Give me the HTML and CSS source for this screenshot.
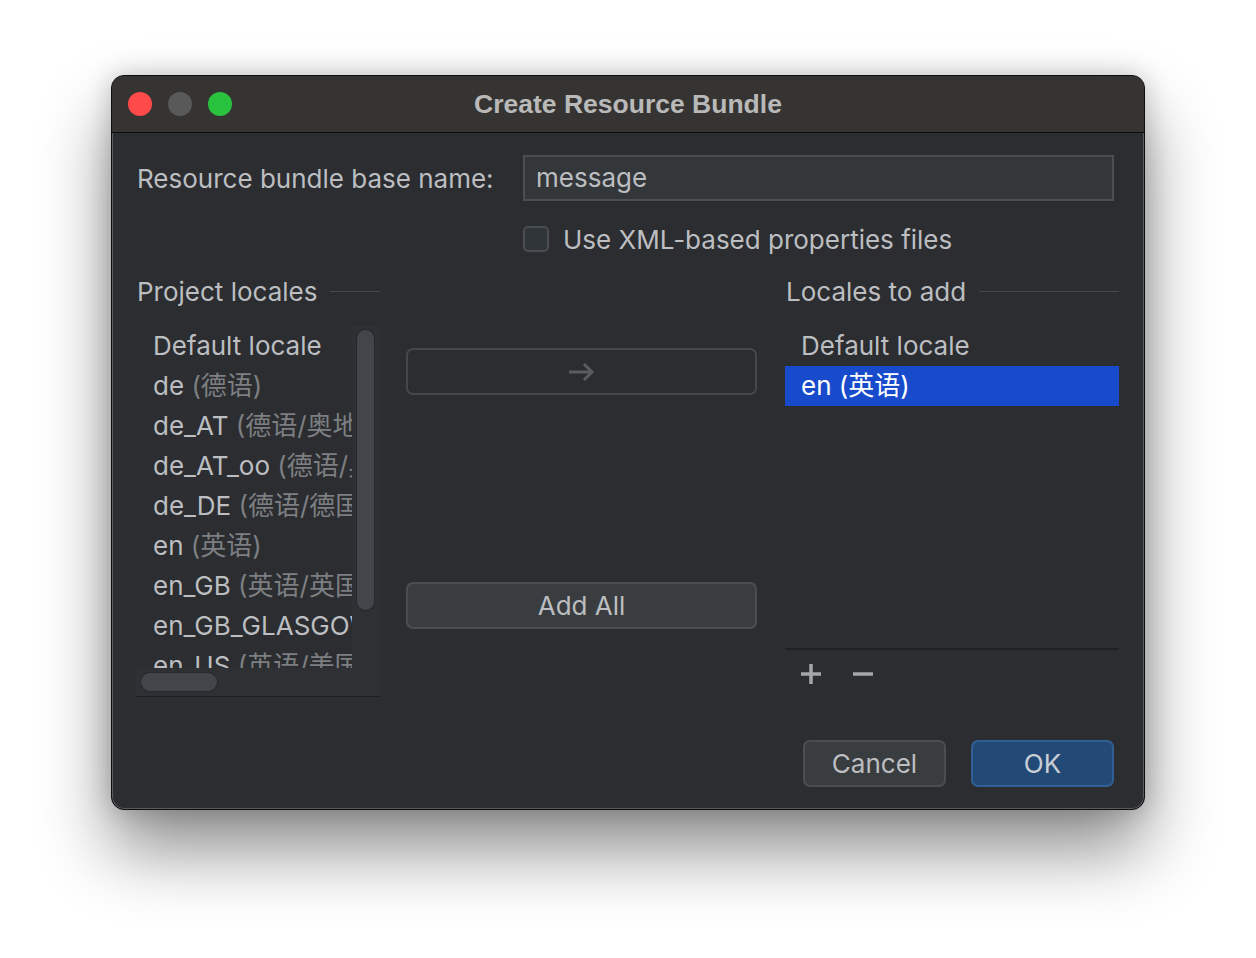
FILE: index.html
```html
<!DOCTYPE html>
<html lang="zh">
<head>
    <meta charset="UTF-8">
    <title>Create Resource Bundle</title>
    <link rel="stylesheet" href="styles.css">
</head>
<body>
    <div class="window">
        <!-- Titelleiste -->
        <div class="titlebar">
            <div class="lights">
                <span class="light red"></span>
                <span class="light grey"></span>
                <span class="light green"></span>
            </div>
            <div class="title">Create Resource Bundle</div>
        </div>

        <div class="content">
            <div class="name-row">
                <label class="name-label" for="baseName">Resource bundle base name:</label>
                <div class="text-field" id="baseName">message</div>
            </div>

            <div class="check-row">
                <span class="checkbox"></span>
                <span>Use XML-based properties files</span>
            </div>

            <div class="locales">
                <div class="group-title"><span>Project locales</span><i></i></div>
                <div></div>
                <div class="group-title"><span>Locales to add</span><i></i></div>

                <!-- linke Liste -->
                <div class="project-list">
                    <div class="list-body">
                        <div class="viewport">
                            <div class="item">Default locale</div>
                            <div class="item">de <em>(德语)</em></div>
                            <div class="item">de_AT <em>(德语/奥地利)</em></div>
                            <div class="item">de_AT_oo <em>(德语/奥地利/OO)</em></div>
                            <div class="item">de_DE <em>(德语/德国)</em></div>
                            <div class="item">en <em>(英语)</em></div>
                            <div class="item">en_GB <em>(英语/英国)</em></div>
                            <div class="item">en_GB_GLASGOW <em>(英语/英国/GLASGOW)</em></div>
                            <div class="item">en_US <em>(英语/美国)</em></div>
                        </div>
                        <div class="vscroll"><span class="vthumb"></span></div>
                    </div>
                    <div class="hscroll"><span class="hthumb"></span></div>
                </div>

                <!-- mittlere Buttons -->
                <div class="middle">
                    <button class="btn arrow-btn">
                        <svg width="28" height="20" viewBox="0 0 28 20">
                            <path d="M1 10 H24 M16 2 L24 10 L16 18" fill="none" stroke="#5a5c5f" stroke-width="3"/>
                        </svg>
                    </button>
                    <button class="btn add-all">Add All</button>
                </div>

                <!-- rechte Liste -->
                <div class="add-list">
                    <div class="add-body">
                        <div class="item">Default locale</div>
                        <div class="item selected">en (英语)</div>
                    </div>
                    <div class="toolbar">
                        <svg width="24" height="24" viewBox="0 0 24 24">
                            <path d="M12 2 V22 M2 12 H22" stroke="#a4a6a9" stroke-width="3.5"/>
                        </svg>
                        <svg width="24" height="24" viewBox="0 0 24 24">
                            <path d="M2 12 H22" stroke="#a4a6a9" stroke-width="3.5"/>
                        </svg>
                    </div>
                </div>
            </div>

            <div class="footer">
                <button class="btn cancel">Cancel</button>
                <button class="btn ok">OK</button>
            </div>
        </div>
    </div>
</body>
</html>
```

FILE: styles.css
```css
html {
    background: #ffffff;
}
body {
    margin: 0;
    min-height: 958px;
    box-sizing: border-box;
    padding: 75px 0 0 111px;
    font-family: "Inter", "Noto Sans CJK SC", sans-serif;
    font-size: 26px;
    color: #bcbec1;
}
.window {
    width: 1034px;
    height: 735px;
    box-sizing: border-box;
    border: 1px solid #0e0e0e;
    border-radius: 13px;
    background: #2b2d30;
    overflow: hidden;
    box-shadow: inset 0 0 0 1px #5b5b5b, 0 40px 70px rgba(0, 0, 0, 0.45), 0 0 26px rgba(0, 0, 0, 0.2);
    display: flex;
    flex-direction: column;
}
.titlebar {
    height: 56px;
    flex: none;
    background: #353432;
    border-bottom: 1px solid #0c0c0c;
    display: flex;
    align-items: center;
    position: relative;
}
.lights {
    display: flex;
    gap: 16px;
    padding-left: 16px;
}
.light {
    width: 24px;
    height: 24px;
    border-radius: 50%;
}
.red { background: #fe4a4a; }
.grey { background: #595959; }
.green { background: #29c33f; }
.title {
    position: absolute;
    left: 0;
    right: 0;
    text-align: center;
    font-family: "Liberation Sans", Arial, sans-serif;
    font-weight: bold;
    font-size: 26.5px;
    color: #b9b9b9;
}
.content {
    padding: 22px 30px 0 24px;
    display: flex;
    flex-direction: column;
}
.name-row {
    display: flex;
    align-items: center;
    height: 46px;
}
.name-label {
    width: 386px;
    padding-left: 1px;
}
.text-field {
    flex: 1;
    height: 46px;
    box-sizing: border-box;
    border: 2px solid #4c4f52;
    background: #34373a;
    padding: 0 11px;
    line-height: 42px;
}
.check-row {
    margin: 25px 0 0 387px;
    height: 26px;
    display: flex;
    align-items: center;
    gap: 14px;
}
.checkbox {
    width: 26px;
    height: 26px;
    box-sizing: border-box;
    border: 2px solid #4a4e51;
    border-radius: 5px;
    background: #2f3538;
}
.locales {
    margin-top: 26px;
    display: grid;
    grid-template-columns: 244px 353px 334px;
    grid-template-rows: 26px 371px;
    column-gap: 26px;
    row-gap: 22px;
}
.group-title {
    display: flex;
    align-items: center;
    gap: 13px;
}
.group-title span {
    padding-left: 1px;
}
.group-title i {
    flex: 1;
    height: 1px;
    background: #45474a;
}
.item {
    height: 40px;
    line-height: 40px;
    padding-left: 17px;
    white-space: nowrap;
}
.item em {
    font-style: normal;
    color: #7d7f82;
}
.project-list {
    display: flex;
    flex-direction: column;
    border-bottom: 1px solid #1f2023;
}
.list-body {
    height: 342px;
    display: flex;
}
.viewport {
    width: 216px;
    overflow: hidden;
}
.vscroll {
    flex: 1;
    background: #2e3033;
    padding: 4px 0 0 5px;
}
.vthumb {
    display: block;
    width: 17px;
    height: 280px;
    border-radius: 9px;
    background: #43454a;
    box-shadow: 0 0 0 1px #26282b;
}
.hscroll {
    height: 28px;
    background: #2e3033;
    padding: 5px 0 0 5px;
    box-sizing: border-box;
}
.hthumb {
    display: block;
    width: 76px;
    height: 18px;
    border-radius: 9px;
    background: #43454a;
    box-shadow: 0 0 0 1px #26282b;
}
.btn {
    font-family: "Inter", "Noto Sans CJK SC", sans-serif;
    font-size: 26px;
    color: #bcbec1;
    height: 47px;
    box-sizing: border-box;
    border: 2px solid #4b4e51;
    border-radius: 7px;
    background: #3a3d40;
    padding: 0;
}
.middle {
    display: flex;
    flex-direction: column;
    padding: 22px 2px 0 0;
}
.arrow-btn {
    background: transparent;
    border-color: #45484b;
    display: flex;
    align-items: center;
    justify-content: center;
}
.add-all {
    margin-top: 187px;
}
.add-list {
    display: flex;
    flex-direction: column;
}
.add-body {
    height: 322px;
    border-bottom: 2px solid #1f2023;
}
.add-body .item {
    padding-left: 16px;
}
.selected {
    background: #174bcb;
    color: #ffffff;
}
.toolbar {
    display: flex;
    gap: 28px;
    padding: 12px 0 0 14px;
}
.footer {
    margin-top: 43px;
    display: flex;
    justify-content: flex-end;
    gap: 25px;
}
.cancel,
.ok {
    width: 143px;
    height: 47px;
}
.ok {
    background: #234a77;
    border-color: #2f5f95;
    color: #c9ced4;
}
```
